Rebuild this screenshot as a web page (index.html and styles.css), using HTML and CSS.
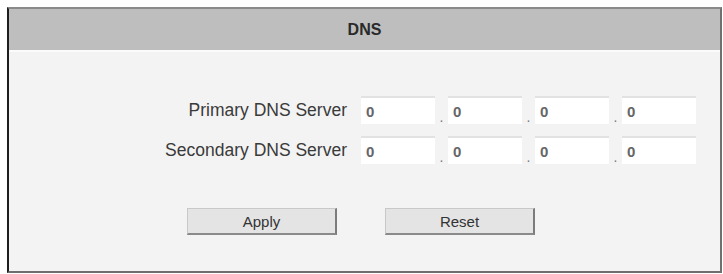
FILE: index.html
```html
<!DOCTYPE html>
<html>
<head>
    <title>DNS</title>
    <link rel="stylesheet" href="styles.css">
</head>
<body>
    <div class="panel">
        <div class="panel-header">DNS</div>
        <div class="panel-body">
            <div class="dns-row">
                <label class="dns-label">Primary DNS Server</label>
                <input class="ip-part" type="text" value="0">
                <span class="ip-dot">.</span>
                <input class="ip-part" type="text" value="0">
                <span class="ip-dot">.</span>
                <input class="ip-part" type="text" value="0">
                <span class="ip-dot">.</span>
                <input class="ip-part" type="text" value="0">
            </div>
            <div class="dns-row">
                <label class="dns-label">Secondary DNS Server</label>
                <input class="ip-part" type="text" value="0">
                <span class="ip-dot">.</span>
                <input class="ip-part" type="text" value="0">
                <span class="ip-dot">.</span>
                <input class="ip-part" type="text" value="0">
                <span class="ip-dot">.</span>
                <input class="ip-part" type="text" value="0">
            </div>
            <div class="actions">
                <button class="btn">Apply</button>
                <button class="btn">Reset</button>
            </div>
        </div>
    </div>
</body>
</html>
```

FILE: styles.css
```css
body {
    font-family: "Liberation Sans", Arial, sans-serif;
    margin: 0;
    padding: 7px 1px 0 7px;
    background: #fff;
}

.panel {
    height: 262px;
    background: #f3f3f3;
    border-left: 2px solid #1e1e1e;
    border-top: 2px solid #8a8a8a;
    border-right: 2px solid #707070;
    border-bottom: 2px solid #6e6e6e;
}

.panel-header {
    height: 41px;
    line-height: 41px;
    text-align: center;
    background: #bebebe;
    border-bottom: 2px solid #fbfbfb;
    font-weight: bold;
    font-size: 16px;
    color: #2a2a2a;
}

.panel-body {
    padding-top: 44px;
}

.dns-row {
    display: flex;
    align-items: center;
    height: 28px;
    margin-bottom: 12px;
}

.dns-label {
    width: 338px;
    margin-right: 14px;
    text-align: right;
    font-size: 17.5px;
    color: #3a3a3a;
}

.ip-part {
    box-sizing: border-box;
    width: 74px;
    height: 28px;
    margin: 0;
    padding: 0 5px;
    background: #fff;
    border: none;
    border-top: 2px solid #e2e2e2;
    font-family: inherit;
    font-size: 15px;
    font-weight: bold;
    color: #666;
}

.ip-dot {
    width: 13px;
    align-self: flex-end;
    text-align: center;
    font-size: 14px;
    line-height: 14px;
    color: #777;
}

.actions {
    display: flex;
    gap: 48px;
    padding: 32px 0 0 178px;
}

.btn {
    box-sizing: border-box;
    width: 150px;
    height: 27px;
    background: #e4e4e4;
    border: 1px solid #c8c8c8;
    border-right: 2px solid #7c7c7c;
    border-bottom: 2px solid #8a8a8a;
    font-family: inherit;
    font-size: 15px;
    color: #333;
    padding: 0;
}
```
